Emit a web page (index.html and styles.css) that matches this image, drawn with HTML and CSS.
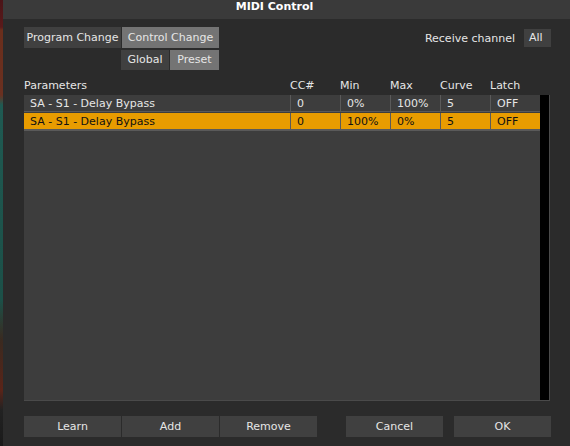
FILE: index.html
```html
<!DOCTYPE html>
<html>
<head>
<meta charset="utf-8">
<link rel="stylesheet" href="styles.css">
</head>
<body>
<div class="strip"></div>
<div class="win">
  <div class="titlebar">MIDI Control</div>
  <div class="content">
    <div class="top">
      <div class="tabs">
        <div class="tabrow">
          <div class="btn">Program Change</div>
          <div class="btn on">Control Change</div>
        </div>
        <div class="tabrow sub">
          <div class="btn small">Global</div>
          <div class="btn small on">Preset</div>
        </div>
      </div>
      <div class="recv">
        <span>Receive channel</span>
        <div class="allbox">All</div>
      </div>
    </div>
    <div class="head">
      <span>Parameters</span><span>CC#</span><span>Min</span><span>Max</span><span>Curve</span><span>Latch</span>
    </div>
    <div class="table">
      <div class="rows">
        <div class="row">
          <div class="cell">SA - S1 - Delay Bypass</div><div class="cell">0</div><div class="cell">0%</div><div class="cell">100%</div><div class="cell">5</div><div class="cell">OFF</div>
        </div>
        <div class="row sel">
          <div class="cell">SA - S1 - Delay Bypass</div><div class="cell">0</div><div class="cell">100%</div><div class="cell">0%</div><div class="cell">5</div><div class="cell">OFF</div>
        </div>
      </div>
      <div class="scroll"></div>
    </div>
    <div class="bottom">
      <div class="group">
        <div class="btn wide">Learn</div>
        <div class="btn wide">Add</div>
        <div class="btn wide">Remove</div>
      </div>
      <div class="group right">
        <div class="btn wide">Cancel</div>
        <div class="btn wide">OK</div>
      </div>
    </div>
  </div>
</div>
</body>
</html>
```
FILE: styles.css
```css
* { box-sizing: border-box; }
html, body { margin: 0; padding: 0; }
body {
  width: 570px; height: 446px; overflow: hidden;
  display: flex;
  background: #2b2b2b;
  font-family: "DejaVu Sans", sans-serif;
  font-size: 11px;
  color: #e6e6e6;
}
.strip {
  width: 3px; flex: none;
  background: linear-gradient(to bottom, #4a1418 0px, #5a1a1a 27px, #6a2e1c 30px, #6a3020 95px, #1f5a52 105px, #1c5048 300px, #3a2a20 340px, #5a2418 390px, #222 410px, #1a1a1a 446px);
}
.win { flex: 1; display: flex; flex-direction: column; background: #2b2b2b; }
.titlebar {
  height: 19px; background: #3a3a3a;
  text-align: center; font-weight: bold; color: #fff;
  line-height: 14px; font-size: 11px;
  padding-right: 24px;
}
.content { padding: 8px 20px 0 21px; display: flex; flex-direction: column; }
.top { display: flex; justify-content: space-between; align-items: flex-start; }
.tabs { display: flex; flex-direction: column; align-items: flex-end; gap: 2px; }
.tabrow { display: flex; gap: 1px; }
.btn {
  background: #404040; color: #e6e6e6;
  height: 21px; line-height: 21px; text-align: center; white-space: nowrap;
}
.tabrow .btn { width: 97px; }
.tabrow .btn.small { width: 48px; height: 20px; line-height: 20px; }
.tabrow .btn.small.on { width: 49px; }
.btn.on { background: #747474; }
.recv { display: flex; align-items: center; gap: 9px; margin-top: 2px; margin-right: -1px; }
.allbox { background: #404040; width: 27px; height: 18px; line-height: 18px; padding-left: 5px; }
.head { display: grid; grid-template-columns: 266px 50px 50px 50px 50px 50px; height: 18px; line-height: 18px; margin-top: 7px; }
.table {
  height: 306px; display: flex; background: #3d3d3d;
  border: 1px solid #4a4a4a; border-left: none; border-top: none;
  width: 526px;
}
.rows { flex: 1; display: flex; flex-direction: column; gap: 1px; }
.row { display: grid; grid-template-columns: 266px 50px 50px 50px 50px 50px; height: 17px; border-bottom: 1px solid #5a5a5a; background: #3d3d3d; }
.row.sel { background: #e89c00; color: #111; border-bottom: 2px solid #5a5a5a; height: 18px; }
.cell { padding-left: 6px; padding-top: 1px; line-height: 15px; border-left: 1px solid #5a5a5a; white-space: nowrap; }
.cell:first-child { border-left: none; }
.scroll { width: 9px; background: #000; flex: none; }
.bottom { display: flex; justify-content: space-between; margin-top: 15px; }
.group { display: flex; gap: 1px; }
.group.right { gap: 11px; margin-right: -1px; }
.btn.wide { width: 97px; }
```
